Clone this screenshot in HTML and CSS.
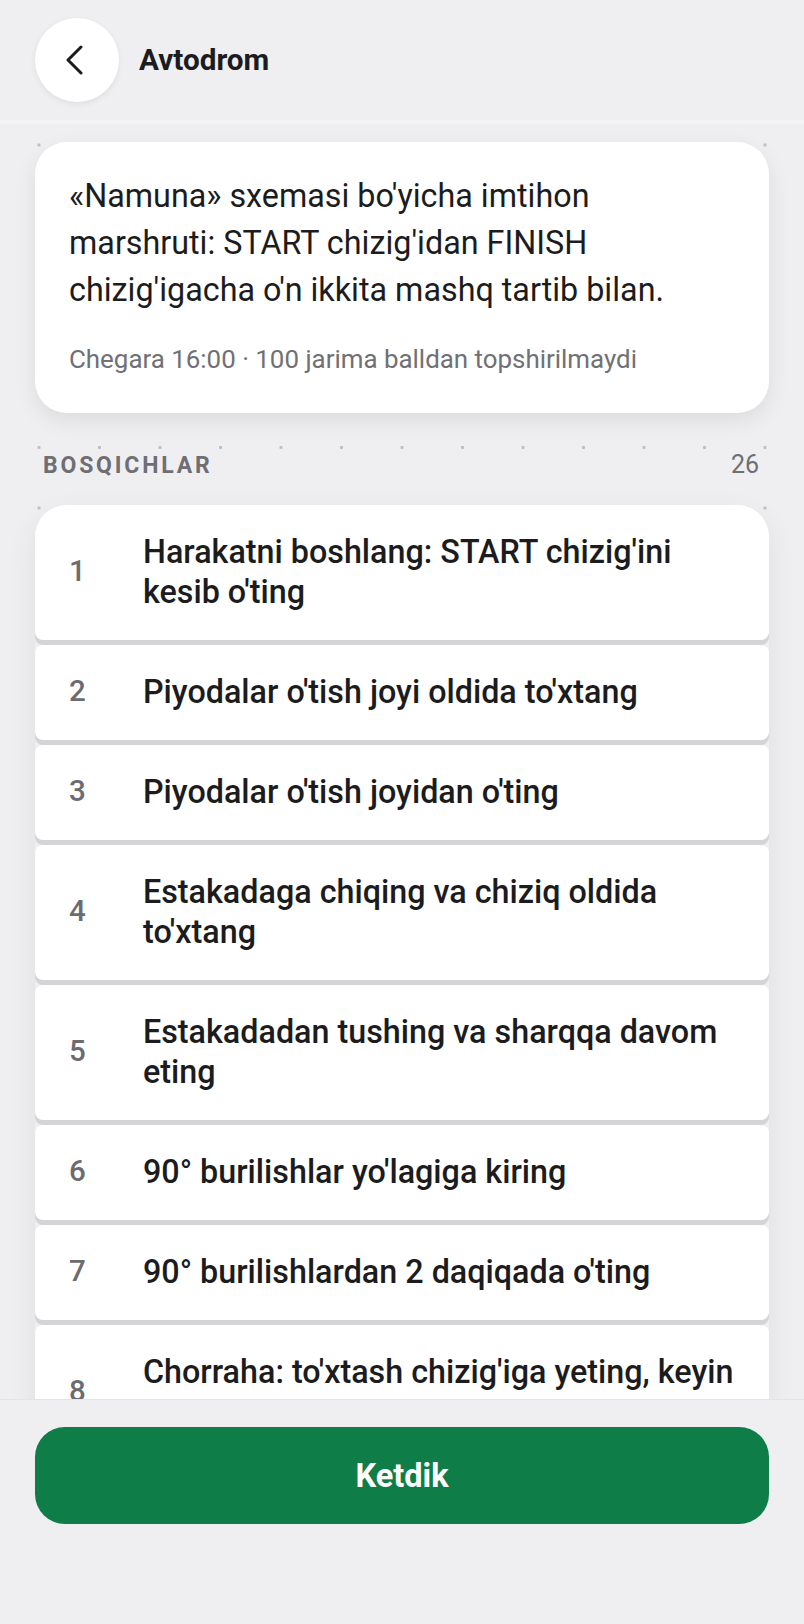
FILE: index.html
```html
<!DOCTYPE html>
<html lang="uz">
<head>
    <meta charset="UTF-8">
    <title>Avtodrom</title>
    <link rel="stylesheet" href="styles.css">
</head>
<body>
<div class="app">
  <div class="topbar">
    <button class="back" aria-label="Orqaga">
      <svg width="30" height="30" viewBox="0 0 30 30">
        <path d="M21 2 L8 15 L21 28" fill="none" stroke="#1c1c1e" stroke-width="3" stroke-linecap="round" stroke-linejoin="round"/>
      </svg>
    </button>
    <div class="title">Avtodrom</div>
  </div>

  <div class="content">
    <div class="intro">
      <p class="intro-text">«Namuna» sxemasi bo'yicha imtihon marshruti: START chizig'idan FINISH chizig'igacha o'n ikkita mashq tartib bilan.</p>
      <p class="intro-meta">Chegara 16:00 · 100 jarima balldan topshirilmaydi</p>
    </div>

    <div class="section-head">
      <span class="section-name">BOSQICHLAR</span>
      <span class="section-count">26</span>
    </div>

    <ol class="steps">
      <li class="step"><span class="num">1</span><span class="label">Harakatni boshlang: START chizig'ini kesib o'ting</span></li>
      <li class="step"><span class="num">2</span><span class="label">Piyodalar o'tish joyi oldida to'xtang</span></li>
      <li class="step"><span class="num">3</span><span class="label">Piyodalar o'tish joyidan o'ting</span></li>
      <li class="step"><span class="num">4</span><span class="label">Estakadaga chiqing va chiziq oldida to'xtang</span></li>
      <li class="step"><span class="num">5</span><span class="label">Estakadadan tushing va sharqqa davom eting</span></li>
      <li class="step"><span class="num">6</span><span class="label">90° burilishlar yo'lagiga kiring</span></li>
      <li class="step"><span class="num">7</span><span class="label">90° burilishlardan 2 daqiqada o'ting</span></li>
      <li class="step"><span class="num">8</span><span class="label">Chorraha: to'xtash chizig'iga yeting, keyin va orqaga qarang</span></li>
      <li class="step"><span class="num">9</span><span class="label">Chorrahadan o'ting</span></li>
    </ol>
  </div>

  <div class="bottom">
    <button class="go">Ketdik</button>
  </div>
</div>
</body>
</html>
```

FILE: styles.css
```css
  * {
    box-sizing: border-box;
  }

  html, body {
    margin: 0;
    padding: 0;
  }

  body {
    background-color: #efeff1;
    color: #1c1c1e;
    font-family: Roboto, "Liberation Sans", sans-serif;
  }

  .app {
    height: 1624px;
    display: flex;
    flex-direction: column;
  }

  .topbar {
    height: 124px;
    flex: none;
    display: flex;
    align-items: center;
    gap: 20px;
    padding: 0 0 0 35px;
    border-bottom: 4px solid #f4f4f6;
    background-color: #efeff1;
  }

  .back {
    width: 84px;
    height: 84px;
    border: none;
    border-radius: 50%;
    background-color: #fff;
    box-shadow: 0 2px 6px rgba(0, 0, 0, 0.07);
    display: flex;
    align-items: center;
    justify-content: center;
    padding: 0 4px 0 0;
  }

  .title {
    font-size: 29.7px;
    font-weight: 700;
    padding-bottom: 2px;
  }

  .content {
    flex: 1;
    overflow: hidden;
    padding: 18px 35px 0;
    background-color: #efeff1;
    background-image: radial-gradient(circle, #bdbdc2 1.3px, transparent 1.8px);
    background-size: 60.5px 60.5px;
    background-position: 8.75px -9.25px;
  }

  .intro {
    background-color: #fff;
    border-radius: 32px;
    padding: 31px 34px 37px;
    box-shadow: 0 8px 22px rgba(0, 0, 0, 0.08);
  }

  .intro-text {
    margin: 0;
    font-size: 32.3px;
    line-height: 47px;
  }

  .intro-meta {
    margin: 28px 0 0;
    font-size: 25.9px;
    line-height: 34px;
    color: #707075;
  }

  .section-head {
    display: flex;
    justify-content: space-between;
    align-items: baseline;
    margin: 37px 0 24px;
    padding: 0 10px 0 8px;
    line-height: 30px;
    color: #6e6e74;
  }

  .section-name {
    font-size: 23px;
    font-weight: 700;
    letter-spacing: 2.8px;
  }

  .section-count {
    font-size: 25px;
  }

  .steps {
    list-style: none;
    margin: 0;
    padding: 0;
    display: flex;
    flex-direction: column;
    gap: 5px;
    box-shadow: 0 10px 30px rgba(0, 0, 0, 0.07);
    border-radius: 32px 32px 8px 8px;
  }

  .step {
    display: flex;
    align-items: center;
    background-color: #fff;
    border-radius: 8px;
    padding: 27px 28px 28px 34px;
    box-shadow: 0 5px 0 #d4d4d6;
  }

  .step:first-child {
    border-radius: 32px 32px 8px 8px;
  }

  .num {
    flex: none;
    width: 74px;
    font-size: 29.5px;
    font-weight: 500;
    color: #6b6b71;
    padding-bottom: 3px;
  }

  .label {
    font-size: 32.3px;
    font-weight: 500;
    line-height: 40px;
  }

  .bottom {
    height: 225px;
    flex: none;
    padding: 27px 35px 0;
    background-color: #efeff1;
    border-top: 1px solid #e4e4e6;
  }

  .go {
    width: 100%;
    height: 97px;
    border: none;
    border-radius: 30px;
    background-color: #0e7d47;
    color: #fff;
    font-family: Roboto, "Liberation Sans", sans-serif;
    font-size: 32.5px;
    font-weight: 700;
  }
```
